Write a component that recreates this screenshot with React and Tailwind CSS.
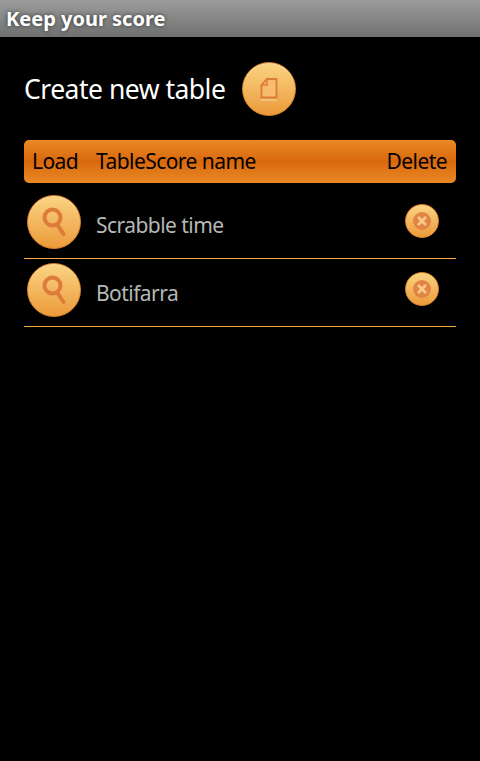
import React from "react";

const rows = [{ name: "Scrabble time" }, { name: "Botifarra" }];

const RoundButton = ({ children }) => (
  <div className="flex h-[54px] w-[54px] shrink-0 items-center justify-center rounded-full border border-[#d9822b] bg-gradient-to-b from-[#f9d482] to-[#ec9a38] shadow-[inset_0_1px_0_#fbdc9e]">
    {children}
  </div>
);

const DeleteButton = () => (
  <div className="flex h-[34px] w-[34px] items-center justify-center rounded-full border border-[#d9822b] bg-gradient-to-b from-[#f9d482] to-[#ec9a38]">
    <svg width="18" height="18" viewBox="0 0 18 18">
      <circle cx="9" cy="9" r="9" fill="#e28443" />
      <path d="M5.8 5.8l6.4 6.4M12.2 5.8l-6.4 6.4" stroke="#f7c98d" strokeWidth="2.8" strokeLinecap="round" />
    </svg>
  </div>
);

const SearchIcon = () => (
  <svg width="24" height="30" viewBox="0 0 24 30" fill="none">
    <circle cx="10.5" cy="10.5" r="8" stroke="#dd7b3a" strokeWidth="4" />
    <path d="M15.5 18l6 9" stroke="#dd7b3a" strokeWidth="4" strokeLinecap="round" />
  </svg>
);

const PageIcon = () => (
  <svg width="18" height="23" viewBox="0 0 18 23" fill="none">
    <path d="M7 1h9.5v18.5H1.5V7z" stroke="#dd7b3a" strokeWidth="1.8" fill="#f7bd6c" />
    <path d="M7 1v6H1.5" stroke="#dd7b3a" strokeWidth="1.5" />
    <path d="M1 22h16" stroke="#f6d9a8" strokeWidth="1" />
  </svg>
);

export default function App() {
  return (
    <div className="h-[761px] w-[480px] bg-black font-['Noto_Sans','Open_Sans',sans-serif] text-white">
      <div className="flex h-[37px] items-center bg-gradient-to-b from-[#9c9c9c] to-[#6f7170] px-[6px] text-[20px] font-bold [text-shadow:0_0_4px_#333]">
        Keep your score
      </div>

      <div className="px-6">
        <div className="mt-[25px] flex items-center">
          <span className="w-[218px] text-[26.5px] leading-[54px] tracking-[-0.5px]">Create new table</span>
          <RoundButton>
            <PageIcon />
          </RoundButton>
        </div>

        <div className="mt-6 flex h-[43px] items-center rounded-[5px] bg-gradient-to-b from-[#e98a24] via-[#d9680c] to-[#e98a24] pl-2 pr-[9px] text-[21px] tracking-[-0.55px] text-black">
          <span className="w-16">Load</span>
          <span className="flex-1">TableScore name</span>
          <span>Delete</span>
        </div>

        <div className="mt-2">
          {rows.map((row) => (
            <div key={row.name} className="flex h-[68px] items-start border-b border-[#f5a93f] pl-[3px]">
              <div className="mt-1">
                <RoundButton>
                  <SearchIcon />
                </RoundButton>
              </div>
              <span className="ml-[15px] mt-[19px] flex-1 text-[21px] leading-[30px] tracking-[-0.55px] text-[#b5b8b5]">{row.name}</span>
              <div className="mr-[17px] mt-[13px]">
                <DeleteButton />
              </div>
            </div>
          ))}
        </div>
      </div>
    </div>
  );
}
